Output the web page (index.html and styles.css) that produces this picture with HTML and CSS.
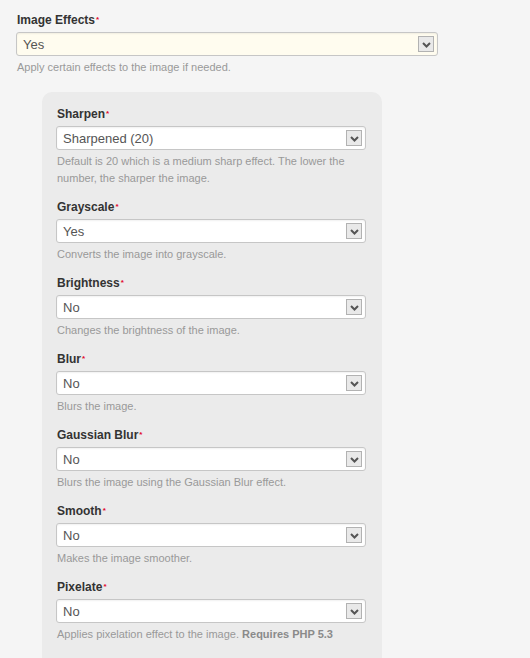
FILE: index.html
```html
<!DOCTYPE html>
<html>
<head>
<meta charset="utf-8">
<link rel="stylesheet" href="styles.css">
</head>
<body>
<div class="page">
  <div class="field top">
    <div class="label">Image Effects<span class="req">*</span></div>
    <div class="select cream"><span class="val">Yes</span><span class="arrow"><svg width="9" height="6" viewBox="0 0 9 6"><path d="M1 1 L4.5 4.5 L8 1" fill="none" stroke="#555" stroke-width="2"/></svg></span></div>
    <div class="desc">Apply certain effects to the image if needed.</div>
  </div>

  <div class="panel">
    <div class="field">
      <div class="label">Sharpen<span class="req">*</span></div>
      <div class="select"><span class="val">Sharpened (20)</span><span class="arrow"><svg width="9" height="6" viewBox="0 0 9 6"><path d="M1 1 L4.5 4.5 L8 1" fill="none" stroke="#555" stroke-width="2"/></svg></span></div>
      <div class="desc">Default is 20 which is a medium sharp effect. The lower the number, the sharper the image.</div>
    </div>
    <div class="field">
      <div class="label">Grayscale<span class="req">*</span></div>
      <div class="select"><span class="val">Yes</span><span class="arrow"><svg width="9" height="6" viewBox="0 0 9 6"><path d="M1 1 L4.5 4.5 L8 1" fill="none" stroke="#555" stroke-width="2"/></svg></span></div>
      <div class="desc">Converts the image into grayscale.</div>
    </div>
    <div class="field">
      <div class="label">Brightness<span class="req">*</span></div>
      <div class="select"><span class="val">No</span><span class="arrow"><svg width="9" height="6" viewBox="0 0 9 6"><path d="M1 1 L4.5 4.5 L8 1" fill="none" stroke="#555" stroke-width="2"/></svg></span></div>
      <div class="desc">Changes the brightness of the image.</div>
    </div>
    <div class="field">
      <div class="label">Blur<span class="req">*</span></div>
      <div class="select"><span class="val">No</span><span class="arrow"><svg width="9" height="6" viewBox="0 0 9 6"><path d="M1 1 L4.5 4.5 L8 1" fill="none" stroke="#555" stroke-width="2"/></svg></span></div>
      <div class="desc">Blurs the image.</div>
    </div>
    <div class="field">
      <div class="label">Gaussian Blur<span class="req">*</span></div>
      <div class="select"><span class="val">No</span><span class="arrow"><svg width="9" height="6" viewBox="0 0 9 6"><path d="M1 1 L4.5 4.5 L8 1" fill="none" stroke="#555" stroke-width="2"/></svg></span></div>
      <div class="desc">Blurs the image using the Gaussian Blur effect.</div>
    </div>
    <div class="field">
      <div class="label">Smooth<span class="req">*</span></div>
      <div class="select"><span class="val">No</span><span class="arrow"><svg width="9" height="6" viewBox="0 0 9 6"><path d="M1 1 L4.5 4.5 L8 1" fill="none" stroke="#555" stroke-width="2"/></svg></span></div>
      <div class="desc">Makes the image smoother.</div>
    </div>
    <div class="field">
      <div class="label">Pixelate<span class="req">*</span></div>
      <div class="select"><span class="val">No</span><span class="arrow"><svg width="9" height="6" viewBox="0 0 9 6"><path d="M1 1 L4.5 4.5 L8 1" fill="none" stroke="#555" stroke-width="2"/></svg></span></div>
      <div class="desc">Applies pixelation effect to the image. <b>Requires PHP 5.3</b></div>
    </div>
  </div>
</div>
</body>
</html>
```
FILE: styles.css
```css
html, body {
  margin: 0;
  padding: 0;
  background: #f5f5f5;
}
body {
  font-family: "Liberation Sans", Arial, sans-serif;
  color: #333;
  height: 658px;
  overflow: hidden;
}
.page {
  padding: 11px 0 0 16px;
  width: 422px;
}
.field {
  display: flex;
  flex-direction: column;
  margin-bottom: 11px;
}
.field.top {
  width: 422px;
  margin-bottom: 16px;
}
.label {
  font-size: 12px;
  font-weight: bold;
  line-height: 18px;
  height: 18px;
  color: #333;
  padding-left: 1px;
}
.top .label {
  margin-bottom: 3px;
}
.req {
  color: #e2062c;
  font-size: 8px;
  line-height: 0;
  vertical-align: 2px;
  margin-left: 1px;
}
.select {
  box-sizing: border-box;
  height: 24px;
  border: 1px solid #c6c6c6;
  border-radius: 3px;
  background: #fff;
  display: flex;
  align-items: center;
  margin-top: 3px;
  box-shadow: inset 0 1px 2px rgba(0,0,0,0.06);
}
.top .select {
  margin-top: 0;
}
.select.cream {
  background: #fffcef;
}
.val {
  flex: 1;
  padding-left: 6px;
  font-size: 13px;
  color: #555;
}
.arrow {
  box-sizing: border-box;
  width: 16px;
  height: 16px;
  margin-right: 3px;
  border: 1px solid #b2b2b2;
  background: #e9e9e9;
  display: flex;
  align-items: center;
  justify-content: center;
}
.arrow svg {
  display: block;
  margin-top: 1px;
}
.desc {
  font-size: 11px;
  line-height: 17px;
  color: #999;
  margin-top: 3px;
  padding-left: 1px;
}
.desc b {
  color: #8a8a8a;
}
.panel {
  margin-left: 26px;
  width: 340px;
  box-sizing: border-box;
  background: #ebebeb;
  border-radius: 10px;
  padding: 13px 16px 20px 14px;
}
```
